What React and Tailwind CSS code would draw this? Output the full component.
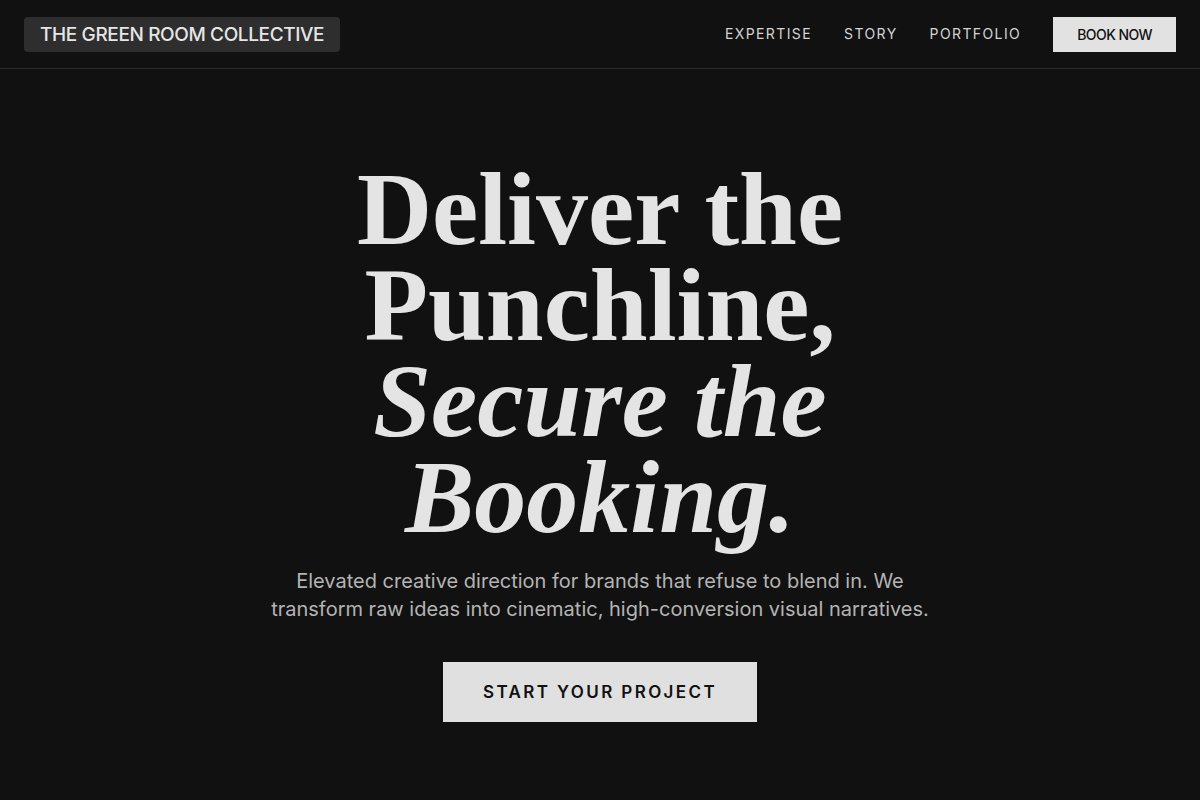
export default function App() {
  const links = ['EXPERTISE', 'STORY', 'PORTFOLIO'];

  return (
    <div className="min-h-screen bg-[#111111] text-[#e2e2e2]" style={{ fontFamily: 'Inter, "Liberation Sans", sans-serif' }}>
      <header className="flex h-[69px] items-center justify-between border-b border-[#2a2a2a] px-6">
        <div className="rounded-sm bg-[#2e2e2e] px-4 py-[5px] text-[19px] font-medium leading-[25px] tracking-[-0.02em] text-[#e6e6e6]">
          THE GREEN ROOM COLLECTIVE
        </div>
        <nav className="flex items-center">
          {links.map((l) => (
            <a key={l} href="#" className="mr-8 text-sm tracking-[0.1em] text-[#d4d4d4]">
              {l}
            </a>
          ))}
          <button className="bg-[#e2e2e2] px-6 py-2 text-sm font-medium leading-[19px] tracking-[-0.04em] text-[#111]">
            BOOK NOW
          </button>
        </nav>
      </header>

      <main className="flex flex-col items-center pt-[92px] text-center">
        <h1 className="text-[104px] font-bold leading-[96px] text-[#e4e4e4]" style={{ fontFamily: '"Liberation Serif", "DejaVu Serif", serif' }}>
          Deliver the
          <br />
          Punchline,
          <br />
          <em className="italic">Secure the</em>
          <br />
          <em className="italic">Booking.</em>
        </h1>
        <p className="mt-[22px] max-w-[672px] text-xl leading-7 text-[#b4b4b4]">
          Elevated creative direction for brands that refuse to blend in. We transform raw ideas into cinematic, high-conversion visual narratives.
        </p>
        <button className="mt-[39px] bg-[#e0e0e0] px-10 py-[18px] text-[17px] font-semibold leading-6 tracking-[0.14em] text-[#111]">
          START YOUR PROJECT
        </button>
      </main>
    </div>
  );
}
